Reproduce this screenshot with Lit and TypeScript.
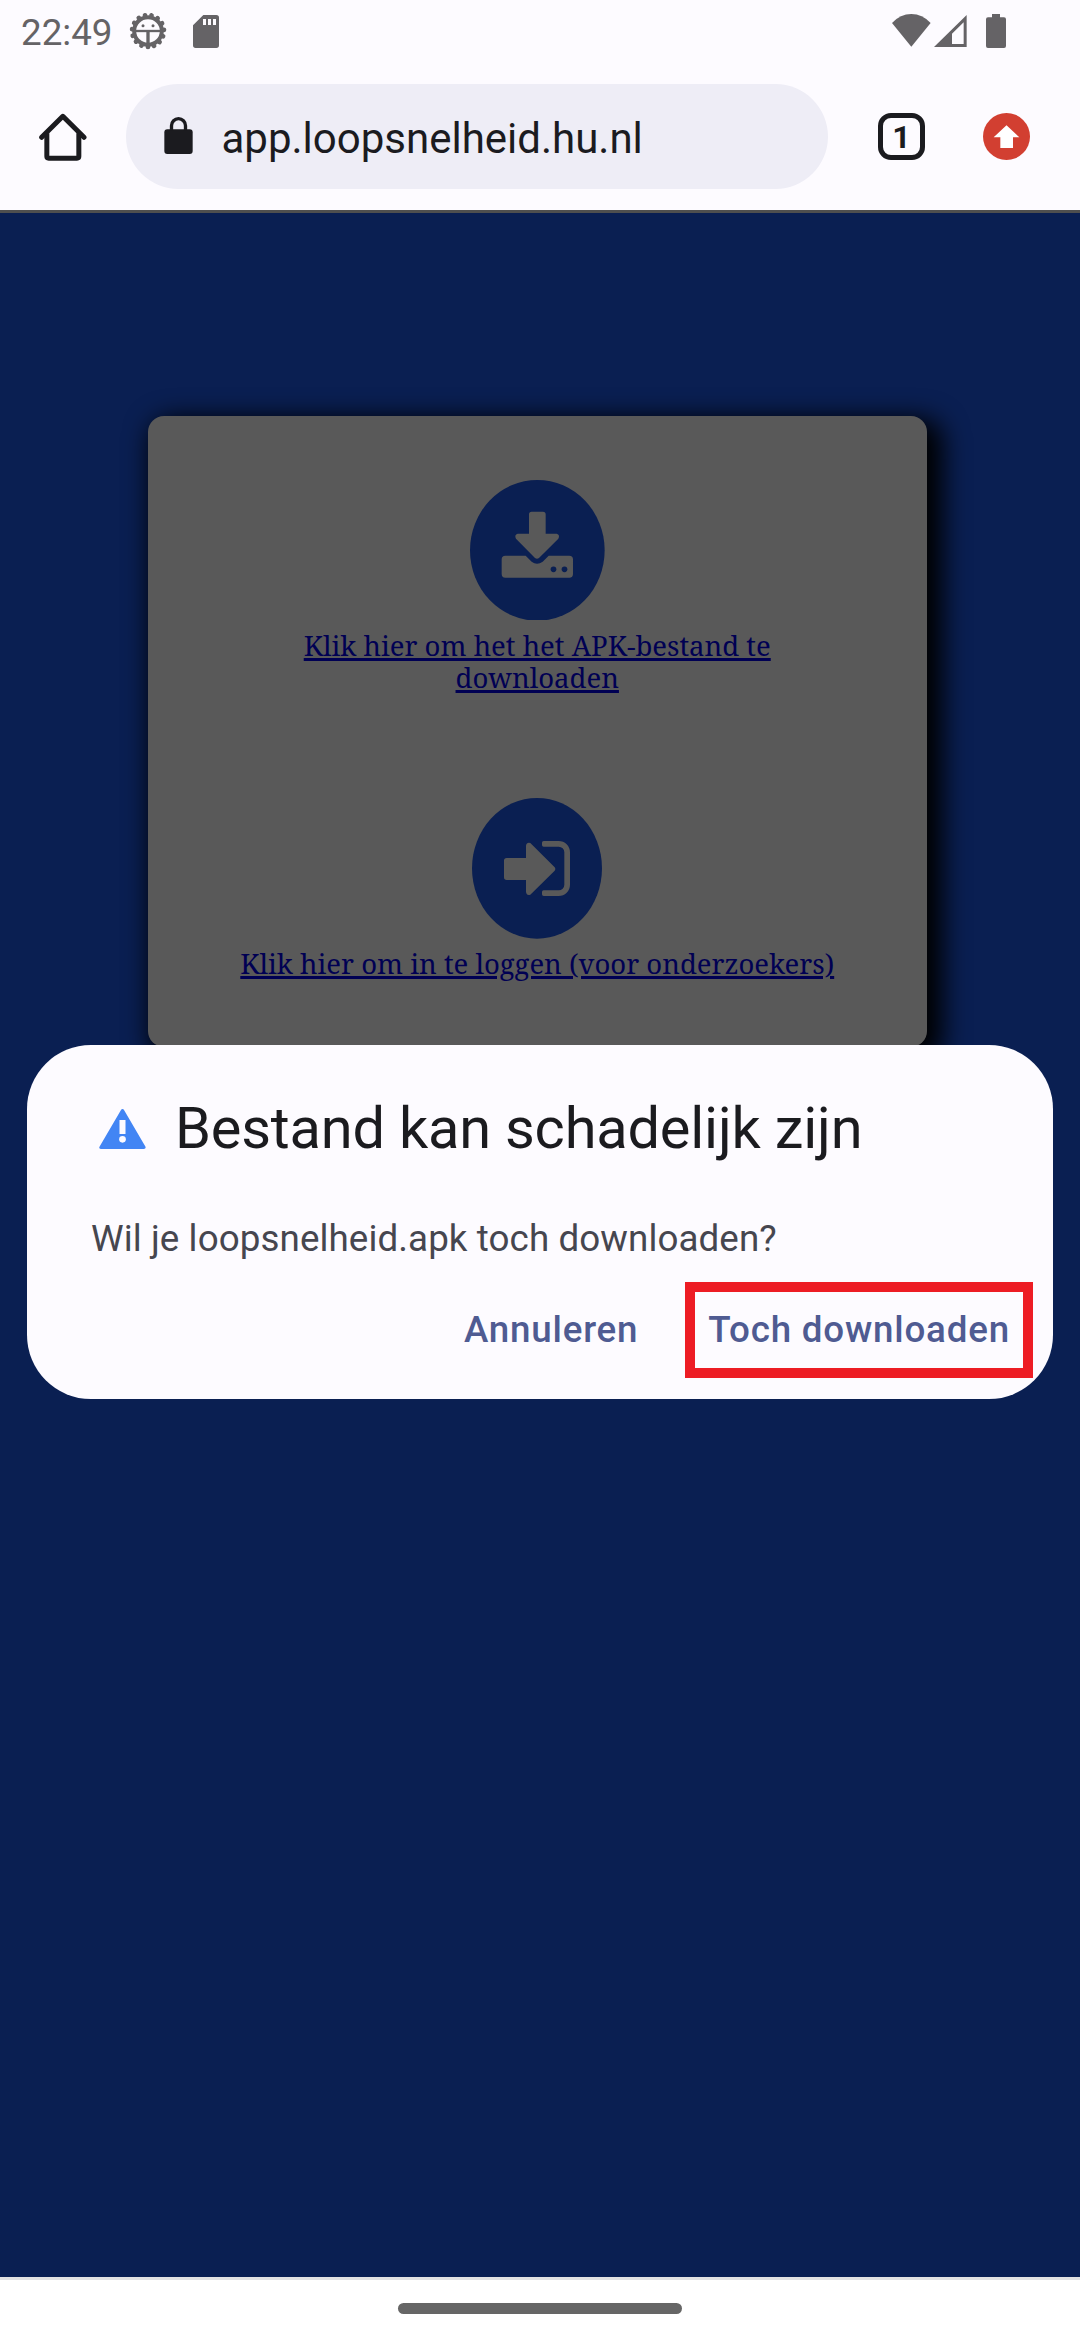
import { LitElement, html, svg, css } from "lit";
import { customElement } from "lit/decorators.js";

@customElement("status-bar")
class StatusBar extends LitElement {
  static styles = css`
    :host { display: flex; align-items: flex-start; height: 84px; box-sizing: border-box; padding-left: 21px; color: #656366; }
    svg { display: block; fill: currentColor; flex: none; }
    .clock { font: 400 36.75px/44px Roboto, sans-serif; margin-top: 11px; width: 108px; white-space: nowrap; }
    .gear { margin-top: 12.33px; width: 38px; height: 38px; }
    .sd { margin: 15px 0 0 26px; width: 26px; height: 33px; }
    .wifi { margin: 14px 0 0 auto; width: 38.67px; height: 32.67px; }
    .signal { margin: 14.67px 0 0 3.67px; width: 32.67px; height: 32px; }
    .battery { margin: 14px 74px 0 19px; width: 20px; height: 34px; }
  `;
  render() {
    return html`
      <span class="clock">22:49</span>
      <svg class="gear" viewBox="387 37 114 114">
        <g fill="none" stroke="currentColor">
          <circle cx="444" cy="94" r="41.500" stroke-width="12"></circle>
          <circle cx="444" cy="94" r="48" stroke-width="14" stroke-linecap="round" stroke-dasharray="0.01 0.99" pathLength="15" transform="rotate(90 444 94)"></circle>
          <path d="M405 94H483" stroke-width="7"></path>
          <path d="M444 96V133" stroke-width="10"></path>
        </g>
        <circle cx="429" cy="78" r="4.500"></circle>
        <circle cx="459" cy="78" r="4.500"></circle>
      </svg>
      <svg class="sd" viewBox="579 45 78 99">
        <path fill-rule="evenodd" d="M610 45H649Q657 45 657 53V136Q657 144 649 144H587Q579 144 579 136V76ZM609 57V75H618V57ZM624 57V75H633V57ZM639 57V75H648V57Z"></path>
      </svg>
      <svg class="wifi" viewBox="516 42 116 98"><path d="M574 140L516 69Q541 42 574 42T632 69Z"></path></svg>
      <svg class="signal" viewBox="643 44 98 96"><path fill-rule="evenodd" d="M643 140H741V44ZM697 100V131H732V66Z"></path></svg>
      <svg class="battery" viewBox="798 42 60 102"><path d="M816 42H840V52H852Q858 52 858 58V138Q858 144 852 144H804Q798 144 798 138V58Q798 52 804 52H816Z"></path></svg>
    `;
  }
}

@customElement("browser-toolbar")
class BrowserToolbar extends LitElement {
  static styles = css`
    :host { display: flex; align-items: center; height: 105px; padding: 0 50px 21px 39px; color: #1b1b1f; font-family: Roboto, sans-serif; }
    svg { display: block; flex: none; }
    .home { width: 48px; height: 48px; }
    .pill { display: flex; align-items: center; width: 702px; height: 105px; box-sizing: border-box; margin-left: 39px; padding-left: 38px; border-radius: 52.5px; background: #eeedf6; }
    .lock { width: 29px; height: 37px; margin-bottom: 2px; }
    .url { font-size: 42px; line-height: 50px; margin: 4px 0 0 28.5px; white-space: nowrap; }
    .tabs { display: flex; align-items: center; justify-content: center; width: 47px; height: 47px; box-sizing: border-box; margin-left: 50px; border: 5px solid #1b1b1f; border-radius: 13px; font: 700 32px/38px Roboto, sans-serif; }
    .update { width: 47px; height: 47px; margin-left: auto; }
  `;
  render() {
    return html`
      <svg class="home" viewBox="119 337 144 144" fill="none" stroke="#1b1b1f" stroke-width="15">
        <path d="M127 410L190.500 347L254 410" stroke-linecap="round" stroke-linejoin="round"></path>
        <path d="M142.500 398V467Q142.500 472.500 148 472.500H233Q238.500 472.500 238.500 467V398" ></path>
      </svg>
      <div class="pill">
        <svg class="lock" viewBox="492 351 87 111">
          <rect x="493" y="388" width="85" height="74" rx="9" fill="#1b1b1f"></rect>
          <path d="M514.500 392V377A21 21 0 0 1 556.500 377V392" fill="none" stroke="#1b1b1f" stroke-width="10"></path>
        </svg>
        <span class="url">app.loopsnelheid.hu.nl</span>
      </div>
      <div class="tabs">1</div>
      <svg class="update" viewBox="789 339 141 141">
        <circle cx="859.500" cy="409.500" r="70.500" fill="#d23f31"></circle>
        <path d="M859.500 376L898 412H879V444H841V412H821Z" fill="#fff"></path>
      </svg>
    `;
  }
}

const downloadIcon = svg`
  <svg class="badge wide" viewBox="90 58 404 422">
    <ellipse cx="292" cy="269" rx="202" ry="211" fill="#0a1f52"></ellipse>
    <path fill="#595959" d="M275 153H309Q317 153 317 161V219H350Q361 222 355 234L297 292Q291 297 285 292L228 234Q222 222 233 219H267V161Q267 153 275 153Z"></path>
    <path fill="#595959" d="M196 285H257L275 303Q291 316 308 303L326 285H388Q399 285 399 296V340Q399 351 388 351H196Q185 351 185 340V296Q185 285 196 285Z"></path>
    <circle cx="340.500" cy="326" r="8.500" fill="#0a1f52"></circle>
    <circle cx="373.500" cy="326" r="8.500" fill="#0a1f52"></circle>
  </svg>`;

const loginIcon = svg`
  <svg class="badge" viewBox="96 54 390 422">
    <ellipse cx="291" cy="265" rx="195" ry="211" fill="#0a1f52"></ellipse>
    <path fill="#595959" d="M200 234H258V197Q260 186 271 189L344 262Q348 267 344 272L271 344Q260 348 258 336V300H200Q192 300 192 292V242Q192 234 200 234Z"></path>
    <path fill="#595959" d="M311 183H356A34 34 0 0 1 390 217V314A34 34 0 0 1 356 348H311Q306 348 306 343V336Q306 331 311 331H356A17 17 0 0 0 373 314V217A17 17 0 0 0 356 200H311Q306 200 306 195V188Q306 183 311 183Z"></path>
  </svg>`;

@customElement("download-card")
class DownloadCard extends LitElement {
  static styles = css`
    :host { display: flex; flex-direction: column; align-items: center; width: 779.5px; height: 631px; box-sizing: border-box; padding-top: 63.5px; border-radius: 16px; background: #595959; box-shadow: 9px 9px 26px 7px #000; }
    .badge { display: block; width: 130px; height: 140.67px; }
    .wide { width: 134.67px; }
    a { display: block; color: #000053; font: 27.5px/32px "Noto Serif", "DejaVu Serif Condensed", "DejaVu Serif", serif; text-align: center; text-decoration: underline; text-decoration-thickness: 2.5px; white-space: nowrap; margin-top: 9.5px; }
    .first { margin-bottom: 104.3px; }
  `;
  render() {
    return html`
      ${downloadIcon}
      <a class="first">Klik hier om het het APK-bestand te<br />downloaden</a>
      ${loginIcon}
      <a>Klik hier om in te loggen (voor onderzoekers)</a>
    `;
  }
}

@customElement("warning-dialog")
class WarningDialog extends LitElement {
  static styles = css`
    :host { display: flex; flex-direction: column; width: 1026px; height: 354px; box-sizing: border-box; padding: 52px 43px 0 64px; border-radius: 64px; background: #fdfbff; font-family: Roboto, sans-serif; }
    .head { display: flex; align-items: center; height: 62px; }
    svg { display: block; flex: none; width: 47px; height: 40px; margin: 2px 0 0 7.5px; }
    .title { font-size: 57.75px; line-height: 62px; letter-spacing: -0.2px; color: #1b1b1f; margin: 0 0 0 29.5px; white-space: nowrap; }
    .body { font-size: 36.75px; line-height: 44px; letter-spacing: 0.09px; color: #46464f; margin-top: 58px; white-space: nowrap; }
    .actions { display: flex; justify-content: flex-end; gap: 70px; margin-top: 47px; font-weight: 500; font-size: 36.75px; line-height: 44px; letter-spacing: 0.8px; color: #4f5b92; white-space: nowrap; }
  `;
  render() {
    return html`
      <div class="head">
        <svg viewBox="266 237 140 120">
          <path fill="#4285f4" d="M336 237Q339 237 341 241L405 350Q407 357 400 357H271Q264 357 267 350L331 241Q333 237 336 237Z"></path>
          <rect x="327" y="270" width="18" height="42" fill="#fdfbff"></rect>
          <circle cx="336" cy="328" r="10" fill="#fdfbff"></circle>
        </svg>
        <span class="title">Bestand kan schadelijk zijn</span>
      </div>
      <div class="body">Wil je loopsnelheid.apk toch downloaden?</div>
      <div class="actions"><span>Annuleren</span><span>Toch downloaden</span></div>
    `;
  }
}

@customElement("app-root")
class AppRoot extends LitElement {
  static styles = css`
    :host { display: flex; flex-direction: column; position: relative; width: 1080px; height: 2340px; overflow: hidden; background: #fdfbff; }
    .page { flex: 1; display: flex; align-items: flex-start; padding: 203px 0 0 147.5px; border-top: 3px solid #4f4f4f; background: #0a1f52; overflow: hidden; }
    .nav { display: flex; justify-content: center; height: 37px; padding-top: 23px; border-top: 3px solid #e2e2e2; background: #fff; }
    .handle { width: 284px; height: 11px; border-radius: 5.5px; background: #666; }
    .modal { position: absolute; left: 27px; top: 1045px; }
    .highlight { position: absolute; left: 685px; top: 1282px; width: 348px; height: 96px; box-sizing: border-box; border: 10px solid #ed1c24; }
  `;
  render() {
    return html`
      <status-bar></status-bar>
      <browser-toolbar></browser-toolbar>
      <div class="page"><download-card></download-card></div>
      <div class="nav"><div class="handle"></div></div>
      <warning-dialog class="modal"></warning-dialog>
      <div class="highlight"></div>
    `;
  }
}
